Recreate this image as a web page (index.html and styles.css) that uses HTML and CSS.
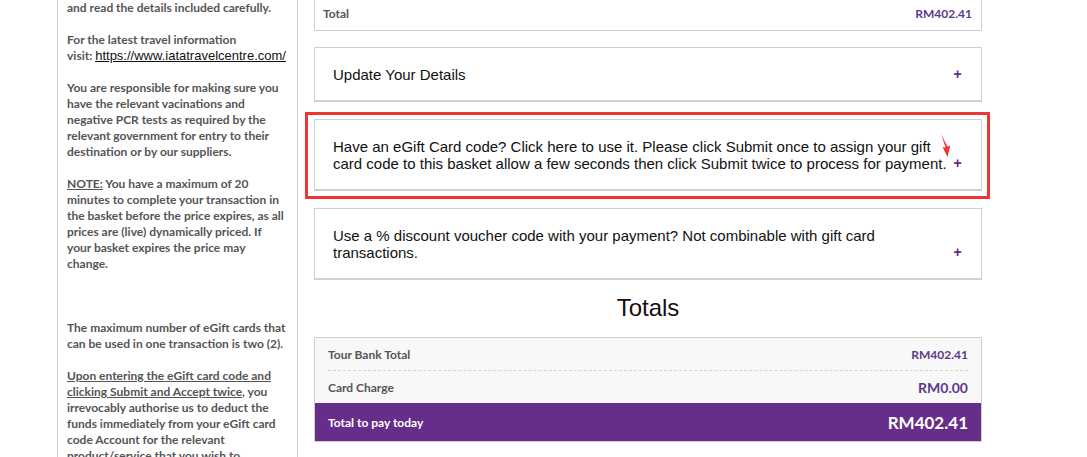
FILE: index.html
```html
<!DOCTYPE html>
<html>
<head>
<meta charset="utf-8">
<link rel="stylesheet" href="styles.css">
</head>
<body>
<div class="page">
  <aside class="sidebar">
    <p>and read the details included carefully.</p>
    <p>For the latest travel information<br>visit: <a class="ext" href="#">https://www.iatatravelcentre.com/</a></p>
    <p>You are responsible for making sure you have the relevant vacinations and negative PCR tests as required by the relevant government for entry to their destination or by our suppliers.</p>
    <p><span class="u">NOTE:</span> You have a maximum of 20 minutes to complete your transaction in the basket before the price expires, as all prices are (live) dynamically priced. If your basket expires the price may change.</p>
    <p class="spaced">The maximum number of eGift cards that can be used in one transaction is two (2).</p>
    <p><span class="u">Upon entering the eGift card code and clicking Submit and Accept twice</span>, you irrevocably authorise us to deduct the funds immediately from your eGift card code Account for the relevant product/service that you wish to purchase.</p>
  </aside>
  <main class="main">
    <div class="summary">
      <span class="summary-label">Total</span>
      <span class="summary-value">RM402.41</span>
    </div>
    <div class="panel">
      <div class="panel-text">Update Your Details</div>
      <span class="plus">+</span>
    </div>
    <div class="panel highlighted">
      <div class="panel-text">Have an eGift Card code? Click here to use it. Please click Submit once to assign your gift card code to this basket allow a few seconds then click Submit twice to process for payment.</div>
      <span class="plus">+</span>
      <span class="annotation"></span>
      <svg class="arrow" width="12" height="24" viewBox="0 0 12 24"><path d="M1 0 L5.6 13.6 L2.6 13.2 L7.6 23 L10.2 11.4 L7.4 12.6 Z" fill="#ef3434"/></svg>
    </div>
    <div class="panel">
      <div class="panel-text">Use a % discount voucher code with your payment? Not combinable with gift card transactions.</div>
      <span class="plus">+</span>
    </div>
    <h2 class="totals-title">Totals</h2>
    <div class="totals">
      <div class="row">
        <span class="label">Tour Bank Total</span>
        <span class="amount">RM402.41</span>
      </div>
      <div class="row last">
        <span class="label">Card Charge</span>
        <span class="amount big">RM0.00</span>
      </div>
      <div class="row pay">
        <span class="label">Total to pay today</span>
        <span class="amount">RM402.41</span>
      </div>
    </div>
  </main>
</div>
</body>
</html>
```

FILE: styles.css
```css
html, body {
  margin: 0;
  padding: 0;
  background: #fff;
  overflow: hidden;
}

.page {
  display: flex;
  align-items: flex-start;
  gap: 16px;
  padding-left: 57px;
}

.sidebar {
  width: 220px;
  flex: none;
  border-left: 1px solid #cfcfcf;
  border-right: 1px solid #cfcfcf;
  padding: 0 10px 40px 9px;
  font-family: Lato, "Open Sans", sans-serif;
  font-weight: 700;
  font-size: 12px;
  line-height: 16px;
  color: #555;
}

.sidebar p {
  margin: 0 0 16px;
}

.sidebar p.spaced {
  margin-top: 48px;
}

.sidebar .u {
  text-decoration: underline;
}

.sidebar .ext {
  font-family: Arial, "Liberation Sans", sans-serif;
  font-weight: 400;
  font-size: 13px;
  color: #111;
  text-decoration: underline;
}

.main {
  width: 668px;
  flex: none;
  display: flex;
  flex-direction: column;
}

.summary {
  display: flex;
  justify-content: space-between;
  border: 1px solid #cfcfcf;
  border-top: none;
  padding: 7px 9px 8px 8px;
  font-family: Lato, sans-serif;
  font-weight: 700;
  font-size: 12px;
  line-height: 16px;
  margin-top: -1px;
}

.summary-label {
  color: #555;
}

.summary-value {
  color: #5b3a8c;
}

.panel {
  position: relative;
  display: flex;
  align-items: flex-end;
  gap: 6px;
  margin-top: 16px;
  border: 1px solid #cfcfcf;
  border-bottom: 2px solid #cfcfcf;
  padding: 18px 19px 17px 18px;
  font-family: Arial, "Liberation Sans", sans-serif;
  font-size: 15px;
  line-height: 17px;
  color: #111;
}

.panel + .panel {
  margin-top: 17px;
}

.panel-text {
  flex: 1;
}

.plus {
  flex: none;
  width: 9px;
  text-align: center;
  font-family: Arial, "Liberation Sans", sans-serif;
  font-weight: 700;
  font-size: 14px;
  line-height: 17px;
  color: #5b2d86;
}

.annotation {
  position: absolute;
  left: -10px;
  top: -8px;
  right: -9px;
  bottom: -10px;
  border: 3px solid #ef3434;
  pointer-events: none;
}

.arrow {
  position: absolute;
  left: 625px;
  top: 14px;
}

.totals-title {
  margin: 14px 0 15px;
  text-align: center;
  font-family: Arial, "Liberation Sans", sans-serif;
  font-weight: 400;
  font-size: 24px;
  line-height: 28px;
  color: #111;
}

.totals {
  border: 1px solid #cfcfcf;
  background: #f8f8f8;
  font-family: Lato, sans-serif;
  font-weight: 700;
}

.row {
  display: flex;
  justify-content: space-between;
  align-items: center;
  height: 32px;
  margin: 0 13px;
  border-bottom: 1px dashed #d4d4d4;
}

.row.last {
  border-bottom: none;
}

.row .label {
  font-size: 12px;
  color: #555;
}

.row .amount {
  font-size: 12px;
  color: #5b3a8c;
}

.row .amount.big {
  font-size: 14px;
}

.row.pay {
  margin: 0;
  padding: 0 13px;
  height: 38px;
  border-bottom: none;
  background: #662d8a;
}

.row.pay .label {
  color: #fff;
  font-size: 12px;
}

.row.pay .amount {
  color: #fff;
  font-size: 17px;
}
```
